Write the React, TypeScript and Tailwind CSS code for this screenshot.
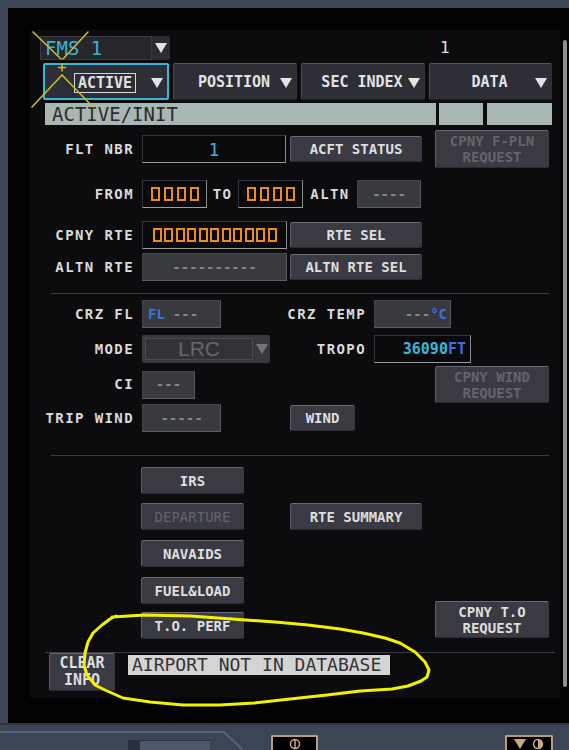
import React from "react";

const Tri = ({ c = "#e4e4e4" }: { c?: string }) => (
  <svg width="12" height="10" viewBox="0 0 12 10">
    <polygon points="0,0 12,0 6,10" fill={c} />
  </svg>
);

const btnBase =
  "flex items-center justify-center rounded-[2px] border border-t-[#6a6a72] border-l-[#5e5e66] border-b-[#2a2a30] border-r-[#3a3a40] bg-[#3a3a42] text-center text-[14px] font-bold leading-[16px]";

function Btn({ className, off, children }: { className: string; off?: boolean; children: React.ReactNode }) {
  return (
    <div className={`${btnBase} ${off ? "text-[#64646b]" : "text-[#dedede]"} ${className}`}>{children}</div>
  );
}

const blackField =
  "flex items-center border border-t-[#34343a] border-l-[#34343a] border-b-[#9c9c9c] border-r-[#8c8c8c] bg-[#0a0a0c]";
const grayField =
  "flex items-center border border-t-[#44444b] border-l-[#44444b] border-b-[#5e5e66] border-r-[#56565e] bg-[#393940] text-[#85858c] text-[14px] font-bold";

function Lbl({ className, children }: { className: string; children: React.ReactNode }) {
  return (
    <div className={`text-right text-[14px] font-bold tracking-[1.4px] text-[#dadada] ${className}`}>{children}</div>
  );
}

function Boxes({ n, gap }: { n: number; gap: string }) {
  return (
    <div className={`flex ${gap}`}>
      {Array.from({ length: n }).map((_, i) => (
        <span key={i} className="h-[14px] w-[9px] border-2 border-[#ef8a1c]" />
      ))}
    </div>
  );
}

function Tab({ w, active, children }: { w: string; active?: boolean; children: React.ReactNode }) {
  return (
    <div
      className={`flex h-[37px] items-center rounded-[2px] bg-[#2e2e36] pt-[2px] ${w} ${
        active ? "border-2 border-[#3bb5d6]" : "border border-t-[#55555d] border-l-[#4c4c54] border-b-[#222228] border-r-[#303036]"
      }`}
    >
      <div className="w-[14px]" />
      <div className="flex flex-1 justify-center text-[15px] font-bold text-[#e2e2e2]">{children}</div>
      <div className="flex w-[16px] items-center justify-start">
        <Tri />
      </div>
    </div>
  );
}

export default function App() {
  return (
    <div className="relative h-[750px] w-[569px] overflow-hidden bg-[#3b4556] font-['DejaVu_Sans_Mono',monospace]">
      <div className="flex h-[723px] pl-[8px] pt-[8px]">
        <div className="flex h-[715px] w-[561px] bg-[#030304]">
          {/* panel */}
          <div className="ml-[22px] mt-[22px] flex h-[668px] w-[530px] flex-col bg-[#0c0c0f]">
            {/* FMS row */}
            <div className="mt-[6px] flex h-[24px] items-center">
              <div className="ml-[10px] flex h-[24px] w-[130px] rounded-[2px] bg-[#2c2c34]">
                <div className="flex w-[112px] items-center border border-[#3a3a42] bg-[#26262d] pl-[4px] text-[19px] text-[#3ab2d4]">
                  FMS 1
                </div>
                <div className="flex flex-1 items-center justify-center">
                  <Tri />
                </div>
              </div>
              <div className="ml-[270px] text-[16px] text-[#e0e0e0]">1</div>
            </div>

            {/* tabs */}
            <div className="mt-[3px] flex gap-[4px] pl-[13px]">
              <Tab w="w-[126px]" active>
                <span className="border-[1.5px] border-[#d6d6d6] px-[3px] leading-[18px]">ACTIVE</span>
              </Tab>
              <Tab w="w-[124px]">POSITION</Tab>
              <Tab w="w-[124px]">SEC INDEX</Tab>
              <Tab w="w-[123px]">DATA</Tab>
            </div>

            {/* title bar */}
            <div className="mt-[3px] flex h-[22px] pl-[15px]">
              <div className="flex w-[391px] items-center bg-[#a8b7b4] pl-[7px] text-[19px] leading-none text-[#2a2c2c]">
                ACTIVE/INIT
              </div>
              <div className="ml-[3px] w-[44px] bg-[#a8b7b4]" />
              <div className="ml-[4px] w-[65px] bg-[#a8b7b4]" />
            </div>

            {/* FLT NBR */}
            <div className="mt-[5px] flex h-[38px] items-center">
              <Lbl className="w-[104px]">FLT NBR</Lbl>
              <div className={`${blackField} ml-[8px] h-[28px] w-[144px] justify-center text-[18px] text-[#3ab4d8]`}>1</div>
              <Btn className="ml-[4px] h-[26px] w-[132px]">ACFT STATUS</Btn>
              <Btn off className="ml-[13px] h-[38px] w-[114px]">
                CPNY F-PLN
                <br />
                REQUEST
              </Btn>
            </div>

            {/* FROM / TO / ALTN */}
            <div className="mt-[12px] flex h-[28px] items-center">
              <Lbl className="w-[104px]">FROM</Lbl>
              <div className={`${blackField} ml-[8px] h-[28px] w-[65px] justify-center`}>
                <Boxes n={4} gap="gap-[4px]" />
              </div>
              <div className="w-[31px] text-center text-[14px] font-bold tracking-[1.4px] text-[#dadada]">TO</div>
              <div className={`${blackField} h-[28px] w-[65px] justify-center`}>
                <Boxes n={4} gap="gap-[4px]" />
              </div>
              <div className="w-[54px] text-center text-[14px] font-bold tracking-[1.4px] text-[#dadada]">ALTN</div>
              <div className={`${grayField} h-[28px] w-[64px] justify-center`}>----</div>
            </div>

            {/* CPNY RTE */}
            <div className="mt-[13px] flex h-[28px] items-center">
              <Lbl className="w-[104px]">CPNY RTE</Lbl>
              <div className={`${blackField} ml-[8px] h-[28px] w-[145px] justify-center`}>
                <Boxes n={11} gap="gap-[2.5px]" />
              </div>
              <Btn className="ml-[3px] h-[26px] w-[132px]">RTE SEL</Btn>
            </div>

            {/* ALTN RTE */}
            <div className="mt-[4px] flex h-[28px] items-center">
              <Lbl className="w-[104px]">ALTN RTE</Lbl>
              <div className={`${grayField} ml-[8px] h-[28px] w-[145px] justify-center`}>----------</div>
              <Btn className="ml-[3px] h-[26px] w-[132px]">ALTN RTE SEL</Btn>
            </div>

            <div className="ml-[21px] mt-[12px] h-px w-[498px] bg-[#3c3c42]" />

            {/* CRZ FL / CRZ TEMP */}
            <div className="mt-[6px] flex h-[28px] items-center">
              <Lbl className="w-[104px]">CRZ FL</Lbl>
              <div className={`${grayField} ml-[8px] h-[28px] w-[79px] pl-[5px]`}>
                <span className="text-[#3d70e0]">FL</span>
                <span className="ml-[8px]">---</span>
              </div>
              <Lbl className="w-[145px]">CRZ TEMP</Lbl>
              <div className={`${grayField} ml-[8px] h-[28px] w-[77px] justify-end pr-[3px]`}>
                <span>---</span>
                <span className="text-[#3d70e0]">°C</span>
              </div>
            </div>

            {/* MODE / TROPO */}
            <div className="mt-[7px] flex h-[28px] items-center">
              <Lbl className="w-[104px]">MODE</Lbl>
              <div className="ml-[8px] flex h-[28px] w-[128px] items-center rounded-[2px] bg-[#38383f] pl-[3px]">
                <div className="flex h-[22px] w-[108px] items-center justify-center border border-[#4a4a52] bg-[#323238] font-['Liberation_Sans',sans-serif] text-[21px] text-[#66666c]">
                  LRC
                </div>
                <div className="flex flex-1 items-center justify-center">
                  <Tri c="#74747b" />
                </div>
              </div>
              <Lbl className="w-[96px]">TROPO</Lbl>
              <div className={`${blackField} ml-[8px] h-[28px] w-[97px] justify-end pr-[4px] text-[15px] font-bold`}>
                <span className="text-[#3ab4d8]">36090</span>
                <span className="text-[#3d70e0]">FT</span>
              </div>
            </div>

            {/* CI */}
            <div className="mt-[3px] flex h-[37px] items-center">
              <Lbl className="w-[104px]">CI</Lbl>
              <div className={`${grayField} ml-[8px] h-[28px] w-[53px] justify-center`}>---</div>
              <Btn off className="ml-[240px] h-[37px] w-[114px]">
                CPNY WIND
                <br />
                REQUEST
              </Btn>
            </div>

            {/* TRIP WIND */}
            <div className="mt-[1px] flex h-[28px] items-center">
              <Lbl className="w-[104px]">TRIP WIND</Lbl>
              <div className={`${grayField} ml-[8px] h-[28px] w-[79px] justify-center`}>-----</div>
              <Btn className="ml-[69px] h-[26px] w-[65px]">WIND</Btn>
            </div>

            <div className="ml-[21px] mt-[23px] h-px w-[498px] bg-[#3c3c42]" />

            {/* page buttons */}
            <div className="mt-[11px] flex items-start">
              <div className="ml-[111px] flex flex-col">
                <Btn className="h-[27px] w-[103px]">IRS</Btn>
                <Btn off className="mt-[9px] h-[27px] w-[103px] !font-normal">DEPARTURE</Btn>
                <Btn className="mt-[10px] h-[27px] w-[103px]">NAVAIDS</Btn>
                <Btn className="mt-[10px] h-[27px] w-[103px]">FUEL&amp;LOAD</Btn>
                <Btn className="mt-[8px] h-[27px] w-[103px]">T.O. PERF</Btn>
              </div>
              <Btn className="ml-[46px] mt-[36px] h-[27px] w-[132px]">RTE SUMMARY</Btn>
              <Btn className="ml-[13px] mt-[134px] h-[37px] w-[114px]">
                CPNY T.O
                <br />
                REQUEST
              </Btn>
            </div>

            <div className="ml-[15px] mt-[13px] h-px w-[510px] bg-[#3a3a40]" />

            {/* message line */}
            <div className="flex items-start">
              <Btn className="ml-[19px] h-[38px] w-[66px] text-[15px] !leading-[17px]">
                CLEAR
                <br />
                INFO
              </Btn>
              <div className="ml-[13px] mt-[2px] flex h-[20px] w-[262px] items-center bg-[#d4d4d4] pl-[4px] text-[18px] leading-none text-[#333335]">
                AIRPORT NOT IN DATABASE
              </div>
            </div>
          </div>

          {/* scroll bar */}
          <div className="ml-[3px] mt-[32px] h-[647px] w-[4px] rounded-full bg-[#8b8e95]" />
        </div>
      </div>

      {/* lower bezel */}
      <div className="relative flex h-[27px] items-start">
        <svg className="absolute left-0 top-0" width="569" height="27">
          <path d="M0 9 H224 L243 27" fill="none" stroke="#56627a" strokeWidth="2" />
          <path d="M0 1 H569" stroke="#2c333f" strokeWidth="2" />
        </svg>
        <div className="relative ml-[128px] mt-[17px] flex h-[10px] w-[82px] bg-[#2a313c]">
          <div className="ml-[12px] mt-[1px] h-[9px] w-[70px] bg-[#4d596b]" />
        </div>
        <div className="relative ml-[61px] mt-[12px] flex h-[15px] w-[47px] items-center justify-center rounded-t-[2px] border-2 border-b-0 border-[#b99d7e] bg-black">
          <svg width="12" height="12" viewBox="0 0 12 12">
            <circle cx="6" cy="6" r="4.5" fill="none" stroke="#c8ab88" strokeWidth="1.5" />
            <line x1="6" y1="1.5" x2="6" y2="10.5" stroke="#c8ab88" strokeWidth="1.5" />
          </svg>
        </div>
        <div className="relative ml-[187px] mt-[12px] flex h-[15px] w-[48px] items-center justify-center gap-[6px] rounded-t-[2px] border-2 border-b-0 border-[#b99d7e] bg-black">
          <svg width="12" height="10" viewBox="0 0 12 10">
            <polygon points="0,0 12,0 6,10" fill="#c8ab88" />
          </svg>
          <svg width="12" height="12" viewBox="0 0 12 12">
            <circle cx="6" cy="6" r="4.5" fill="none" stroke="#c8ab88" strokeWidth="1.5" />
            <path d="M6 1.5 A4.5 4.5 0 0 1 6 10.5 Z" fill="#c8ab88" />
          </svg>
        </div>
      </div>

      {/* yellow annotations */}
      <svg className="pointer-events-none absolute left-0 top-0" width="569" height="750">
        <g stroke="#cdb92c" strokeWidth="1.6" strokeLinecap="round">
          <line x1="33" y1="32" x2="61" y2="59" />
          <line x1="88" y1="32" x2="63" y2="59" />
          <line x1="62" y1="75" x2="32" y2="107" />
          <line x1="62" y1="75" x2="93" y2="107" />
          <line x1="62" y1="64" x2="62" y2="71" />
          <line x1="58.5" y1="67.5" x2="65.5" y2="67.5" />
        </g>
        <polyline
          points="112,617 145,615 190,616 232,619 275,622 308,625 340,629 363,633 385,638 400,643 415,652 425,662 429,670 427,677 421,681 408,686 392,689 360,691 327,695 290,699 254,703 220,705 183,705 150,702 123,698 105,690 95,685 87,675 84,665 85,653 88,642 93,633 102,625 110,619 116,616"
          fill="none"
          stroke="#f2f200"
          strokeWidth="3"
          strokeLinejoin="round"
          strokeLinecap="round"
        />
      </svg>
    </div>
  );
}
